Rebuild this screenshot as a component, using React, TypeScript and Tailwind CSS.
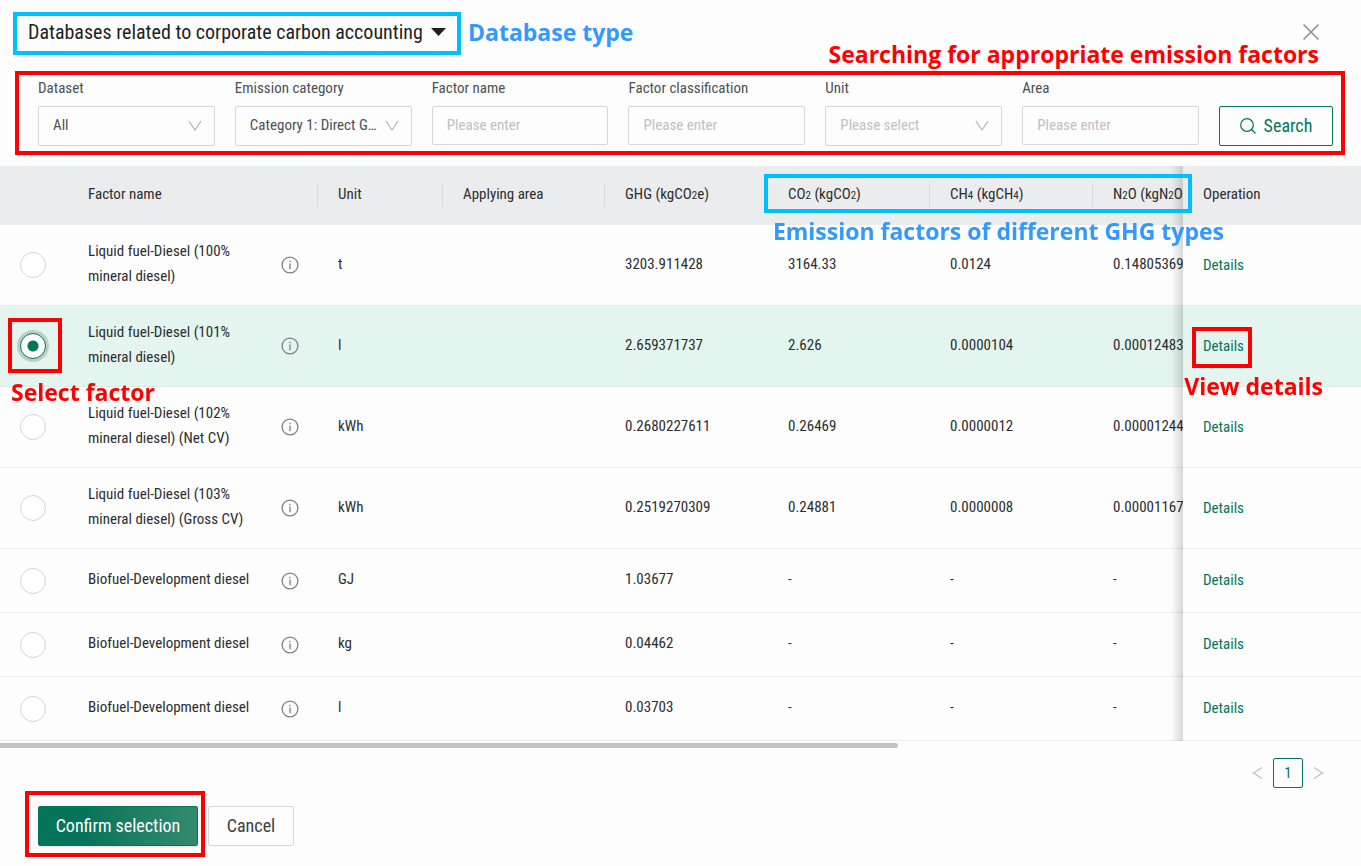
import React, { useState } from "react";

interface Factor {
  id: number;
  name: string;
  unit: string;
  ghg: string;
  co2: string;
  ch4: string;
  n2o: string;
}

const factors: Factor[] = [
  { id: 1, name: "Liquid fuel-Diesel (100% mineral diesel)", unit: "t", ghg: "3203.911428", co2: "3164.33", ch4: "0.0124", n2o: "0.14805369" },
  { id: 2, name: "Liquid fuel-Diesel (101% mineral diesel)", unit: "l", ghg: "2.659371737", co2: "2.626", ch4: "0.0000104", n2o: "0.00012483" },
  { id: 3, name: "Liquid fuel-Diesel (102% mineral diesel) (Net CV)", unit: "kWh", ghg: "0.2680227611", co2: "0.26469", ch4: "0.0000012", n2o: "0.00001244" },
  { id: 4, name: "Liquid fuel-Diesel (103% mineral diesel) (Gross CV)", unit: "kWh", ghg: "0.2519270309", co2: "0.24881", ch4: "0.0000008", n2o: "0.00001167" },
  { id: 5, name: "Biofuel-Development diesel", unit: "GJ", ghg: "1.03677", co2: "-", ch4: "-", n2o: "-" },
  { id: 6, name: "Biofuel-Development diesel", unit: "kg", ghg: "0.04462", co2: "-", ch4: "-", n2o: "-" },
  { id: 7, name: "Biofuel-Development diesel", unit: "l", ghg: "0.03703", co2: "-", ch4: "-", n2o: "-" },
];

const Sub: React.FC<{ children: React.ReactNode }> = ({ children }) => (
  <span className="text-[11px]">{children}</span>
);

const Note: React.FC<{ className: string; children: React.ReactNode }> = ({ className, children }) => (
  <span
    className={`pointer-events-none absolute z-20 whitespace-nowrap font-['Open_Sans','Noto_Sans',sans-serif] text-[23px] leading-7 font-bold ${className}`}
  >
    {children}
  </span>
);

const ChevronDown = () => (
  <svg
    className="pointer-events-none absolute top-3 right-3 h-4 w-4 text-[#b4b6ba]"
    viewBox="0 0 16 16"
    fill="none"
    stroke="currentColor"
    strokeWidth="1.2"
  >
    <path d="M2 3.2 8 12l6-8.8" />
  </svg>
);

const InfoIcon = () => (
  <svg className="h-[18px] w-[18px]" viewBox="0 0 18 18" fill="none" stroke="#7b7e89" strokeWidth="1.3">
    <circle cx="9" cy="9" r="7.9" />
    <path d="M9 7.6v5.6M9 4.8v1.4" />
  </svg>
);

interface FieldProps {
  id: string;
  label: string;
  placeholder?: string;
  options?: string[];
}

const Field: React.FC<FieldProps> = ({ id, label, placeholder, options }) => (
  <div className="min-w-0 flex-1">
    <label htmlFor={id} className="mb-1.5 block h-6 text-[15px] leading-6 text-[#4b5052]">
      {label}
    </label>
    {options ? (
      <div className="relative">
        <select
          id={id}
          className={`block h-10 w-full appearance-none overflow-hidden rounded-xs border border-[#d6d7d9] bg-transparent pr-8 pb-0.5 pl-3.5 text-[15px] text-ellipsis ${
            placeholder ? "text-[#bfc0c3]" : "text-[#4b5052]"
          }`}
        >
          {options.map((o) => (
            <option key={o}>{o}</option>
          ))}
        </select>
        <ChevronDown />
      </div>
    ) : (
      <input
        id={id}
        type="text"
        placeholder={placeholder}
        className="block h-[39px] w-full rounded-xs border border-[#d6d7d9] bg-transparent px-3.5 pb-0.5 text-[15px] placeholder:text-[#bfc0c3]"
      />
    )}
  </div>
);

const HeadCell: React.FC<{ children?: React.ReactNode; divider?: boolean }> = ({ children, divider }) => (
  <th className="relative pb-0.5 pl-5 text-left font-normal">
    {children}
    {divider && <span className="absolute top-[17px] right-0 h-6 w-px bg-[#d9dadc]" />}
  </th>
);

export default function App() {
  const [selected, setSelected] = useState(2);

  return (
    <div className="min-h-screen bg-[#fdfdfd] pt-3 font-['Roboto_Condensed','Liberation_Sans_Narrow',Roboto,sans-serif] text-[15px] text-[#2b2d2f]">
      {/* Title */}
      <header className="flex items-start justify-between pr-[42px] pl-[13px]">
        <div className="relative border-4 border-[#00bfff]">
          <select
            aria-label="Database type"
            className="block h-[35px] w-[440px] appearance-none bg-transparent pr-8 pb-1 pl-[11px] text-xl text-[#1d1f21]"
          >
            <option>Databases related to corporate carbon accounting</option>
          </select>
          <svg className="pointer-events-none absolute top-3 right-[11px] h-2 w-[15px]" viewBox="0 0 15 8">
            <path d="M0 0h15L7.500 8z" fill="#1d1f21" />
          </svg>
          <Note className="top-0.5 left-[451px] text-[#3399ff]">Database type</Note>
        </div>
        <button type="button" aria-label="Close" className="mt-3 h-4 w-4 text-[#8c8c8c]">
          <svg viewBox="0 0 16 16" stroke="currentColor" strokeWidth="1.5">
            <path d="M.5.5l15 15M15.500.5l-15 15" />
          </svg>
        </button>
      </header>

      {/* Filters */}
      <form
        className="relative mt-4 mr-4 ml-[15px] flex items-start gap-5 border-4 border-[#ff0000] pt-px pr-2 pb-[5px] pl-[19px]"
        onSubmit={(e) => e.preventDefault()}
      >
        <Note className="right-[22px] -top-[35px] text-[#ff0000]">Searching for appropriate emission factors</Note>
        <Field id="dataset" label="Dataset" options={["All"]} />
        <Field id="category" label="Emission category" options={["Category 1: Direct GHG emissions"]} />
        <Field id="name" label="Factor name" placeholder="Please enter" />
        <Field id="classification" label="Factor classification" placeholder="Please enter" />
        <Field id="unit" label="Unit" placeholder="Please select" options={["Please select"]} />
        <Field id="area" label="Area" placeholder="Please enter" />
        <button
          type="submit"
          className="flex h-10 w-[114px] shrink-0 items-center justify-center gap-2 self-end rounded-xs border border-[#04755a] text-lg text-[#04755a]"
        >
          <svg className="h-4 w-4" viewBox="0 0 16 16" fill="none" stroke="currentColor" strokeWidth="1.2">
            <circle cx="7" cy="7" r="6.300" />
            <path d="m11.500 11.500 4 4" />
          </svg>
          Search
        </button>
      </form>

      {/* Factor table */}
      <div className="relative mt-[11px]">
        <div className="relative overflow-hidden">
          <table className="w-[2070px] table-fixed border-separate border-spacing-0">
            <colgroup>
              <col className="w-[68px]" />
              <col className="w-[193px]" />
              <col className="w-[57px]" />
              <col className="w-[125px]" />
              <col className="w-[162px]" />
              <col className="w-[163px]" />
              <col className="w-[162px]" />
              <col className="w-[163px]" />
              <col />
              <col className="w-[178px]" />
            </colgroup>
            <thead>
              <tr className="h-[59px] bg-[#ebecee]">
                <HeadCell />
                <HeadCell>Factor name</HeadCell>
                <HeadCell divider />
                <HeadCell divider>Unit</HeadCell>
                <HeadCell divider>Applying area</HeadCell>
                <HeadCell divider>
                  GHG (kgCO<Sub>2</Sub>e)
                </HeadCell>
                <HeadCell divider>
                  CO<Sub>2</Sub> (kgCO<Sub>2</Sub>)
                </HeadCell>
                <HeadCell divider>
                  CH<Sub>4</Sub> (kgCH<Sub>4</Sub>)
                </HeadCell>
                <HeadCell>
                  N<Sub>2</Sub>O (kgN<Sub>2</Sub>O)
                </HeadCell>
                <th className="sticky right-0 z-10 bg-[#ebecee] pb-0.5 pl-5 text-left font-normal">Operation</th>
              </tr>
            </thead>
            <tbody>
              {factors.map((f) => {
                const active = f.id === selected;
                const cell = `border-b pl-5 ${active ? "border-[#d8ebe4] bg-[#e4f4ee]" : "border-[#ececee] bg-[#fdfdfd]"}`;
                return (
                  <tr key={f.id} className={f.id < 5 ? "h-[81px]" : "h-16"}>
                    <td className={cell}>
                      <input
                        type="radio"
                        name="factor"
                        aria-label={f.name}
                        checked={active}
                        onChange={() => setSelected(f.id)}
                        className="block h-[26px] w-[26px] appearance-none rounded-full border border-[#d4d5d7] bg-white checked:border-[#04755a] checked:bg-[radial-gradient(circle,#04755a_5px,white_6px)] checked:ring-3 checked:ring-[#5a7a6f]/30"
                      />
                    </td>
                    <td className={`${cell} pb-0.5 leading-[25px]`}>{f.name}</td>
                    <td className={cell}>
                      <InfoIcon />
                    </td>
                    <td className={`${cell} pb-0.5`}>{f.unit}</td>
                    <td className={cell} />
                    <td className={`${cell} pb-0.5`}>{f.ghg}</td>
                    <td className={`${cell} pb-0.5`}>{f.co2}</td>
                    <td className={`${cell} pb-0.5`}>{f.ch4}</td>
                    <td className={`${cell} pb-0.5`}>{f.n2o}</td>
                    <td className={`${cell} sticky right-0 z-10`}>
                      <a href="#details" className="text-[#04755a]">
                        Details
                      </a>
                    </td>
                  </tr>
                );
              })}
            </tbody>
          </table>
          {/* Shadow cast by the fixed column */}
          <div className="pointer-events-none absolute inset-y-0 right-[178px] w-3 bg-linear-to-l from-black/15 to-transparent" />
        </div>
        <div className="mt-0.5 h-[5px] w-[66%] rounded-r-full bg-[#c1c2c7]" />

        {/* Callouts */}
        <div className="pointer-events-none absolute top-2 right-[169px] z-20 h-[39px] w-[428px] border-4 border-[#00bfff]" />
        <Note className="top-[51px] right-[137px] text-[#3399ff]">Emission factors of different GHG types</Note>
        <div className="pointer-events-none absolute top-[152px] left-2 z-20 h-[55px] w-[54px] border-4 border-[#ff0000]" />
        <Note className="top-[212px] left-[11px] text-[#ff0000]">Select factor</Note>
        <div className="pointer-events-none absolute top-[161px] right-[109px] z-20 h-[41px] w-[60px] border-4 border-[#ff0000]" />
        <Note className="top-[206px] right-[38px] text-[#ff0000]">View details</Note>
      </div>

      {/* Pagination */}
      <nav className="mt-[10px] flex items-center justify-end gap-2 pr-9">
        <button type="button" aria-label="Previous page" className="text-[#c0c0c0]">
          <svg className="h-3.5 w-3.5" viewBox="0 0 14 14" fill="none" stroke="currentColor" strokeWidth="1.3">
            <path d="M11 1.500 2.500 7l8.500 5.500" />
          </svg>
        </button>
        <button type="button" className="h-[30px] w-[30px] rounded-xs border border-[#04755a] text-[#04755a]">
          1
        </button>
        <button type="button" aria-label="Next page" className="text-[#c0c0c0]">
          <svg className="h-3.5 w-3.5" viewBox="0 0 14 14" fill="none" stroke="currentColor" strokeWidth="1.3">
            <path d="m3 1.500 8.500 5.500-8.500 5.500" />
          </svg>
        </button>
      </nav>

      {/* Actions */}
      <footer className="mt-[3px] flex items-start gap-[3px] pl-[25px] text-lg">
        <div className="border-4 border-[#ff0000] pt-[11px] pr-[3px] pb-[7px] pl-[9px]">
          <button
            type="button"
            className="block h-10 w-40 rounded-xs border border-[#04755a] bg-linear-to-r from-[#04755a] from-30% to-[#318a70] text-white shadow-sm"
          >
            Confirm selection
          </button>
        </div>
        <button type="button" className="mt-[15px] h-10 w-[86px] rounded-xs border border-[#d6d7d9] text-[#3c3f41]">
          Cancel
        </button>
      </footer>
    </div>
  );
}
